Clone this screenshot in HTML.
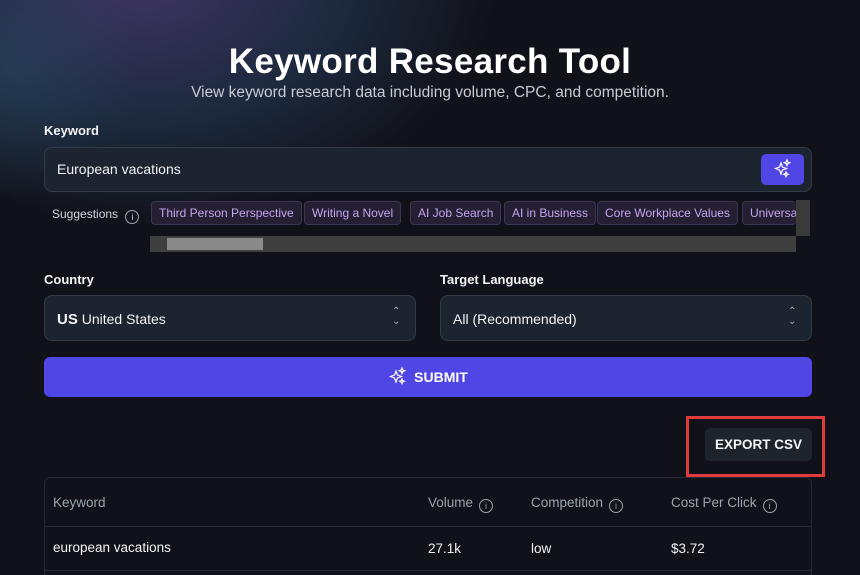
<!DOCTYPE html><html><head><style>
*{box-sizing:border-box;margin:0;padding:0}
html,body{width:860px;height:575px;overflow:hidden}
body{background:#111219;font-family:"Liberation Sans",sans-serif;color:#e5e7eb;position:relative}
.glow{position:absolute;left:-150px;top:-230px;width:650px;height:460px;border-radius:50%;background:radial-gradient(ellipse at 45% 45%,rgba(95,75,150,.6),rgba(45,75,115,.4) 40%,rgba(17,18,25,0) 70%)}
.glow2{position:absolute;left:-120px;top:-60px;width:260px;height:260px;border-radius:50%;background:radial-gradient(circle,rgba(50,90,120,.35),rgba(17,18,25,0) 70%)}
.abs{position:absolute}
h1{position:absolute;top:42px;width:100%;text-align:center;font-size:35px;font-weight:900;color:#fff;letter-spacing:.3px}
.sub{top:84px;width:100%;text-align:center;font-size:15.5px;color:#c9cbd3}
.lbl{font-size:13px;font-weight:bold;color:#f3f4f6}
.box{background:#1c2430;border:1px solid #343b48;border-radius:8px}
.chip{position:absolute;top:201px;height:24px;border:1px solid #3b3552;background:#241f33;border-radius:4px;color:#c4a5f0;font-size:12px;line-height:22px;padding:0 7px;white-space:nowrap}
.th{position:absolute;top:495px;font-size:13.5px;color:#9ca3af}
.td{position:absolute;top:541px;font-size:13.5px;color:#f3f4f6}
.i{display:inline-block;width:14px;height:14px;border:1px solid #9ca3af;border-radius:50%;font-size:9px;line-height:12px;text-align:center;margin-left:6px;vertical-align:-2px}
</style></head><body>
<div class="glow"></div><div class="glow2"></div>
<h1>Keyword Research Tool</h1>
<div class="abs sub">View keyword research data including volume, CPC, and competition.</div>
<div class="abs lbl" style="left:44px;top:123px">Keyword</div>
<div class="abs box" style="left:44px;top:147px;width:768px;height:45px"></div>
<div class="abs" style="left:57px;top:161px;font-size:14px;color:#f3f4f6">European vacations</div>
<div class="abs" style="left:761px;top:154px;width:43px;height:31px;background:#5046e5;border-radius:5px"><svg width="43" height="31" viewBox="0 0 43 31"><path d="M20 9l1.5 4 4 1.5-4 1.5-1.5 4-1.5-4-4-1.5 4-1.5z M26 6l.8 2 2 .8-2 .8-.8 2-.8-2-2-.8 2-.8z M25 18l.7 1.6 1.6.7-1.6.7-.7 1.6-.7-1.6-1.6-.7 1.6-.7z" fill="none" stroke="#fff" stroke-width="1.2"/></svg></div>
<div class="abs" style="left:52px;top:207px;font-size:12px;color:#d1d5db">Suggestions <span class="i" style="margin-left:4px">i</span></div>
<div class="chip" style="left:151px">Third Person Perspective</div>
<div class="chip" style="left:304px">Writing a Novel</div>
<div class="chip" style="left:410px">AI Job Search</div>
<div class="chip" style="left:504px">AI in Business</div>
<div class="chip" style="left:597px">Core Workplace Values</div>
<div class="chip" style="left:742px;width:54px;overflow:hidden;border-right:none">Universal</div>
<div class="abs" style="left:796px;top:200px;width:14px;height:36px;background:#3a3a3a"></div>
<div class="abs" style="left:150px;top:236px;width:646px;height:16px;background:#3f3f3f"><div style="position:absolute;left:17px;top:2px;width:96px;height:12px;background:#8a8a8a"></div></div>
<div class="abs lbl" style="left:44px;top:272px">Country</div>
<div class="abs lbl" style="left:440px;top:272px">Target Language</div>
<div class="abs box" style="left:44px;top:295px;width:372px;height:46px"></div>
<div class="abs box" style="left:440px;top:295px;width:372px;height:46px"></div>
<div class="abs" style="left:57px;top:311px;font-size:14px;color:#f3f4f6"><b style="font-size:15px">US</b> United States</div>
<div class="abs" style="left:453px;top:311px;font-size:14px;color:#f3f4f6">All (Recommended)</div>
<div class="abs" style="left:392px;top:307px;font-size:10px;color:#aaa;line-height:10px">⌃<br>⌄</div>
<div class="abs" style="left:788px;top:307px;font-size:10px;color:#aaa;line-height:10px">⌃<br>⌄</div>
<div class="abs" style="left:44px;top:357px;width:768px;height:40px;background:#5046e5;border-radius:6px;text-align:center;line-height:40px;font-weight:bold;font-size:14px;color:#fff"><svg width="20" height="20" viewBox="0 0 20 20" style="vertical-align:-4px;margin-right:6px"><path d="M8 5l1.5 4 4 1.5-4 1.5-1.5 4-1.5-4-4-1.5 4-1.5z M14 2l.8 2 2 .8-2 .8-.8 2-.8-2-2-.8 2-.8z M14 13l.7 1.6 1.6.7-1.6.7-.7 1.6-.7-1.6-1.6-.7 1.6-.7z" fill="none" stroke="#fff" stroke-width="1.2"/></svg>SUBMIT</div>
<div class="abs" style="left:686px;top:416px;width:139px;height:61px;border:3px solid #e03b3b"></div>
<div class="abs" style="left:705px;top:428px;width:107px;height:33px;background:#1f232b;border-radius:5px;text-align:center;line-height:33px;font-weight:bold;font-size:13.5px;color:#f3f4f6">EXPORT CSV</div>
<div class="abs" style="left:44px;top:477px;width:768px;height:110px;border:1px solid #262a33;border-radius:6px"></div>
<div class="abs" style="left:45px;top:526px;width:766px;height:1px;background:#262a33"></div>
<div class="abs" style="left:45px;top:570px;width:766px;height:1px;background:#262a33"></div>
<div class="th" style="left:53px">Keyword</div>
<div class="th" style="left:428px">Volume<span class="i">i</span></div>
<div class="th" style="left:531px">Competition<span class="i">i</span></div>
<div class="th" style="left:671px">Cost Per Click<span class="i">i</span></div>
<div class="td" style="left:53px;top:540px">european vacations</div>
<div class="td" style="left:428px">27.1k</div>
<div class="td" style="left:531px">low</div>
<div class="td" style="left:671px">$3.72</div>
</body></html>
